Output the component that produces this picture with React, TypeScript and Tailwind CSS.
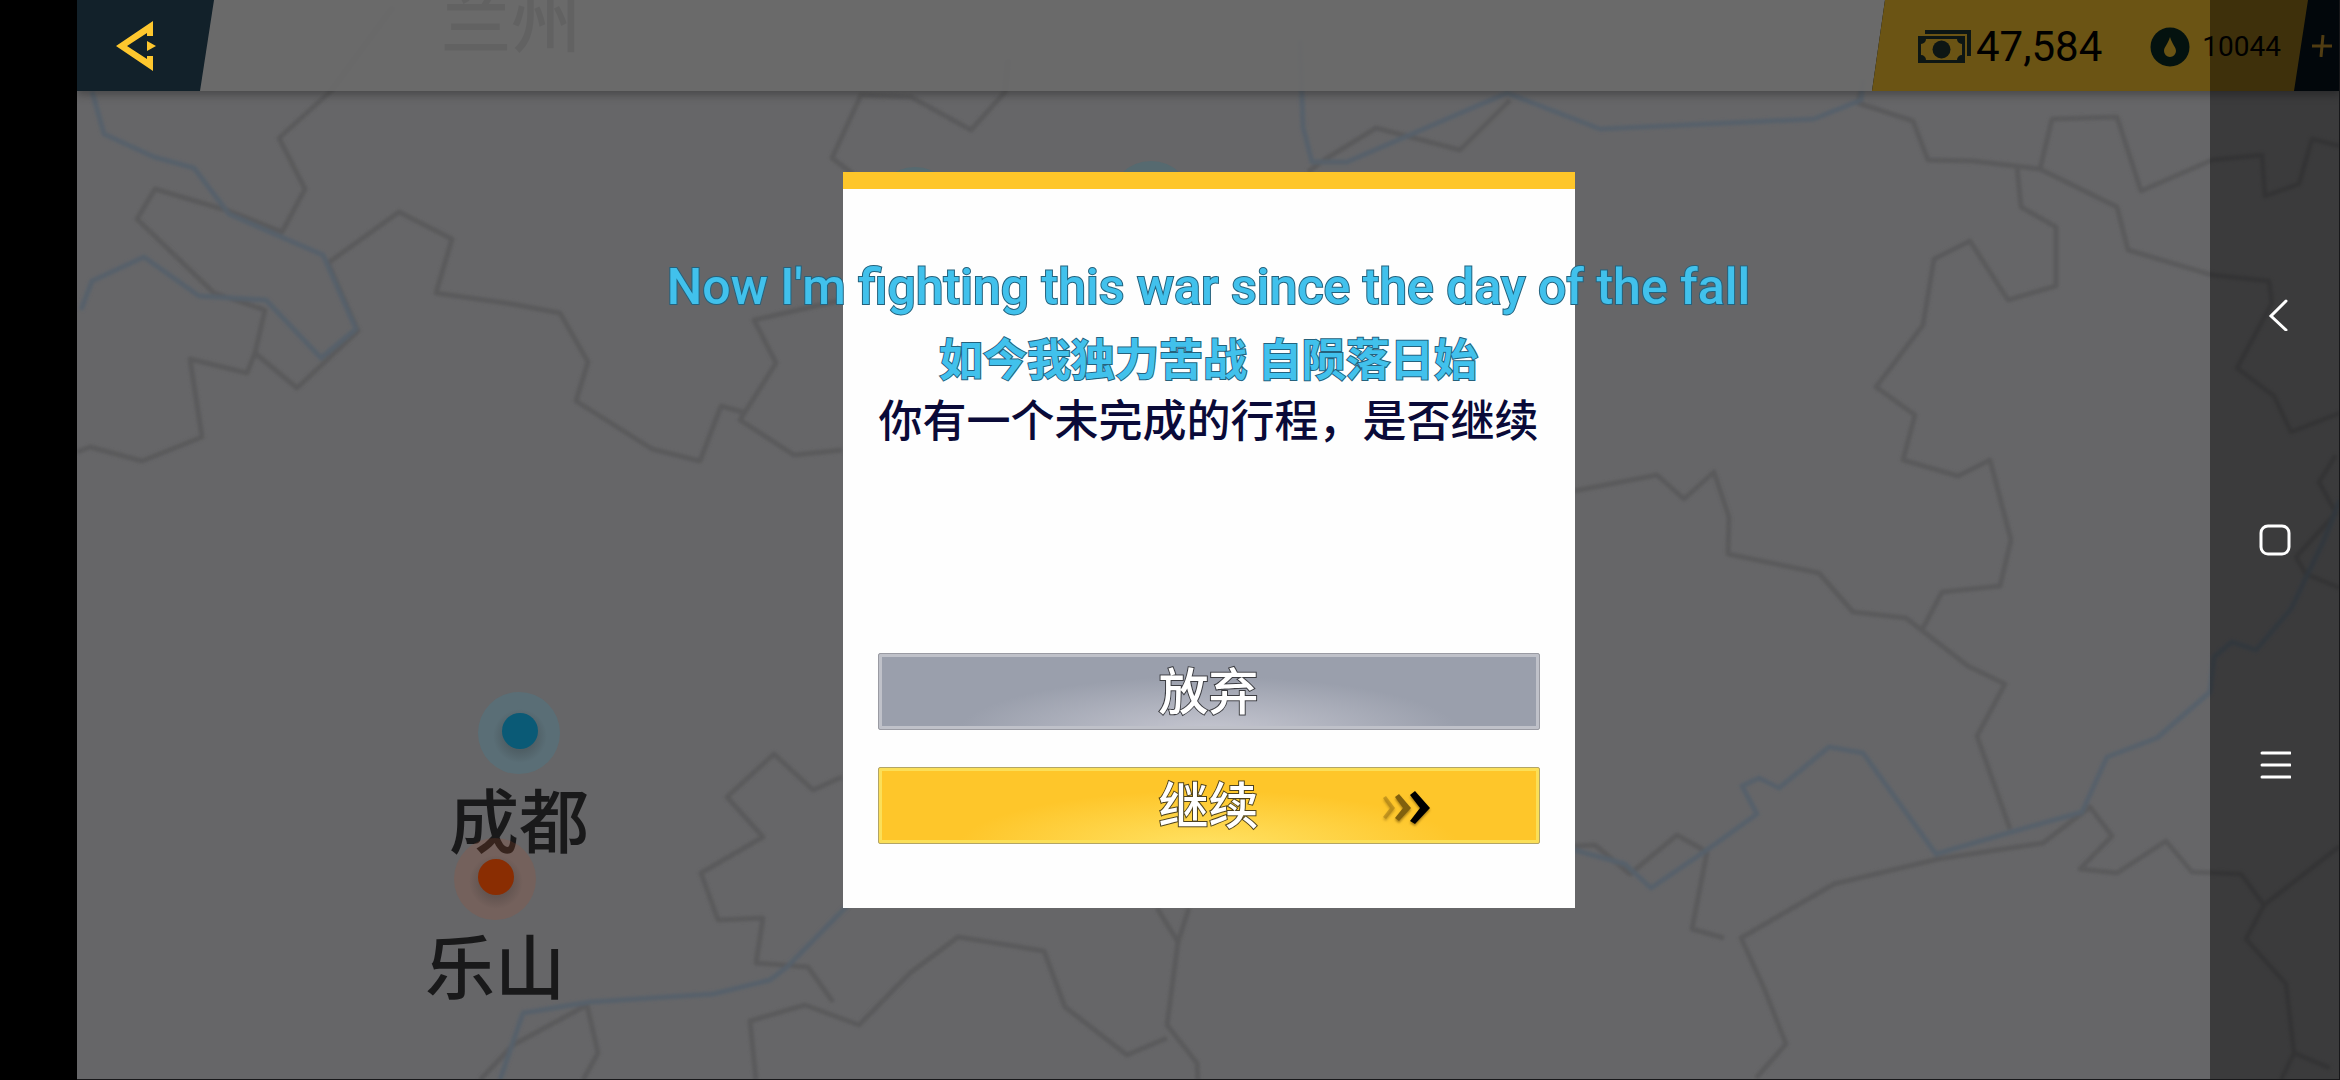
import React, { useState } from 'react';

const borders = [
  'M393 7 L331 91 L279 138 L305 189 L282 232 L229 211 L155 189 L137 219 L214 293 L265 310 L255 353 L247 373 L190 359 L202 437 L142 461 L90 447 L77 452',
  'M255 353 L297 388 L358 331 L328 263 L399 212 L452 239 L436 293 L512 304 L560 313 L588 362 L576 401 L652 449 L700 461 L721 406 L746 413',
  'M842 300 L754 320 L776 363 L740 420 L794 455 L842 450',
  'M1008 60 L1005 92 L971 130 L911 97 L861 95 L832 158 L853 174',
  'M1308 172 L1324 160 L1376 128 L1460 150 L1510 100',
  'M1861 91 L1858 103 L1913 121 L1928 160 L1973 161 L2040 169 L2052 119 L2117 117 L2141 191 L2212 160 L2262 155 L2265 196 L2299 184 L2312 139 L2340 146',
  'M2040 169 L2117 207 L2128 250 L2212 275 L2269 281 L2272 303 L2237 368 L2274 396 L2291 432 L2340 413',
  'M2017 167 L2021 207 L2056 227 L2056 286 L2008 300 L1970 241 L1934 259 L1923 325 L1876 387 L1915 415 L1903 460 L1958 476 L1990 460 L2011 540 L2000 586 L1942 592 L1923 628',
  'M1574 491 L1657 475 L1684 499 L1714 472 L1729 517 L1728 554 L1819 573 L1853 612 L1906 618 L1968 666 L2005 684 L1977 736 L2010 829',
  'M1574 846 L1595 845 L1630 874 L1677 835 L1707 852 L1692 929 L1724 938',
  'M1756 1078 L1786 1044 L1764 988 L1741 938 L1834 884 L1938 859 L2043 843 L2090 807 L2112 836 L2080 869 L2117 873 L2166 841 L2192 872 L2241 874 L2264 905 L2340 846',
  'M2264 905 L2246 939 L2286 984 L2294 1053 L2281 1080',
  'M2294 1053 L2330 1068',
  'M2336 455 L2319 482 L2336 513 L2296 557 L2306 574 L2340 588',
  'M842 777 L813 790 L774 754 L727 797 L763 837 L701 873 L718 920 L763 918 L756 963 L808 967 L833 1002',
  'M756 1080 L750 1021 L805 1005 L859 1025 L910 973 L958 937 L1044 951 L1065 1007 L1127 1055 L1167 1038',
  'M1157 908 L1178 942 L1167 1025 L1197 1063 L1198 1080',
  'M1189 908 L1178 942',
  'M480 1080 L513 1045 L587 1005 L598 1053 L583 1080',
];

const rivers = [
  'M92 91 L104 134 L154 157 L194 168 L229 214 L279 236 L323 255 L356 329 L321 358 L266 300 L199 296 L144 257 L92 281 L81 310',
  'M1300 40 L1303 127 L1312 162 L1347 162 L1507 93 L1600 129 L1814 119 L1861 100 L1863 80',
  'M1574 850 L1625 864 L1651 888 L1704 852 L1757 814 L1742 786 L1759 778 L1779 788 L1829 747 L1863 753 L1936 854 L2008 833 L2082 812 L2107 757 L2157 738 L2210 692 L2214 657 L2232 642 L2256 650 L2291 609 L2324 540 L2340 500',
  'M848 905 L787 967 L770 980 L713 994 L590 1002 L523 1013 L500 1080',
];

function MapBackdrop() {
  return (
    <svg
      className="absolute inset-0 h-full w-full"
      viewBox="77 0 2263 1080"
      preserveAspectRatio="xMinYMin slice"
      fill="none"
      strokeLinejoin="round"
      aria-hidden="true"
    >
      <defs>
        <filter id="soften" x="-5%" y="-5%" width="110%" height="110%">
          <feGaussianBlur stdDeviation="1.5" />
        </filter>
        <radialGradient id="pinShade">
          <stop offset="55%" stopColor="#222" stopOpacity="0.2" />
          <stop offset="100%" stopColor="#222" stopOpacity="0" />
        </radialGradient>
      </defs>
      <g filter="url(#soften)">
        {borders.map((d) => (
          <path key={d} d={d} stroke="#5a5a5b" strokeWidth="5" />
        ))}
        {rivers.map((d) => (
          <path key={d} d={d} stroke="#56606b" strokeWidth="5" />
        ))}
      </g>
      <circle cx="915" cy="208" r="41" fill="#566a70" />
      <circle cx="1151" cy="202" r="41" fill="#566a70" />
    </svg>
  );
}

interface CityPinProps {
  name: string;
  place: string;
  halo: string;
  dot: string;
}

function CityPin({ name, place, halo, dot }: CityPinProps) {
  return (
    <button
      type="button"
      className={`absolute flex flex-col items-center text-[70px] leading-[100px] font-medium text-[#19191a] ${place}`}
    >
      <svg className="h-[82px] w-[82px]" viewBox="0 0 82 82" aria-hidden="true">
        <circle cx="41" cy="41" r="41" className={halo} />
        <circle cx="42" cy="44" r="27" fill="url(#pinShade)" />
        <circle cx="42" cy="39" r="18" className={dot} />
      </svg>
      <span>{name}</span>
    </button>
  );
}

function CashIcon() {
  return (
    <svg className="h-[34px] w-[54px]" viewBox="0 0 54 34" fill="#0d1614" aria-hidden="true">
      <path d="M7 0 H53 V26 H49 V4 H7 Z" />
      <path
        fillRule="evenodd"
        d="M0 6 H47 V33 H0 Z M8 9 A5 5 0 0 1 3 14 V25 A5 5 0 0 1 8 30 H39 A5 5 0 0 1 44 25 V14 A5 5 0 0 1 39 9 Z"
      />
      <circle cx="23.500" cy="19.500" r="9" />
    </svg>
  );
}

function DropIcon() {
  return (
    <svg className="h-10 w-10" viewBox="0 0 40 40" aria-hidden="true">
      <circle cx="20" cy="20" r="19.500" fill="#04120f" />
      <path d="M20 10 C22 17 26 20 26 24 A6 6 0 0 1 14 24 C14 20 18 17 20 10 Z" fill="#6b5414" />
    </svg>
  );
}

function TopBar() {
  return (
    <header className="relative flex h-[91px] bg-[#6a6a6a]/90 shadow-[0_4px_8px_rgba(40,40,40,0.45)]">
      <button
        type="button"
        aria-label="返回"
        className="flex w-[137px] items-center bg-[#12212a] pl-[39px] [clip-path:polygon(0_0,100%_0,calc(100%-14px)_100%,0_100%)]"
      >
        <svg className="h-[50px] w-10" viewBox="0 0 40 50" fill="#fec72e" aria-hidden="true">
          <path d="M0 25 L37 0 V15 H31 V12 L11 25 L31 38 V35 H37 V50 Z" />
          <path d="M31 20 L40 25 L31 30 Z" />
        </svg>
      </button>
      <div className="ml-auto flex w-[468px] bg-[#050d13] text-black [clip-path:polygon(13px_0,100%_0,100%_100%,0_100%)]">
        <div className="flex w-[436px] items-center bg-[#6b5414] pt-0.5 pl-[46px] [clip-path:polygon(0_0,100%_0,calc(100%-14px)_100%,0_100%)]">
          <CashIcon />
          <span className="ml-1 text-[42px]">47,584</span>
          <span className="ml-12 flex items-center gap-3 text-[28px]">
            <DropIcon />
            10044
          </span>
        </div>
        <button type="button" aria-label="充值" className="flex items-center pl-[3px]">
          <svg className="h-[22px] w-[22px]" viewBox="0 0 22 22" stroke="#8a6820" strokeWidth="3" aria-hidden="true">
            <path d="M1 11 H21 M12 0 L10 22" />
          </svg>
        </button>
      </div>
    </header>
  );
}

function TripDialog({ onClose }: { onClose: () => void }) {
  return (
    <div className="absolute inset-0 flex items-center justify-center">
      <section
        role="dialog"
        aria-modal="true"
        aria-labelledby="trip-message"
        className="flex h-[736px] w-[732px] flex-col border-t-[17px] border-[#fec62a] bg-[#fefefe] px-[35px] pb-[64px]"
      >
        <p
          id="trip-message"
          className="mt-[201px] text-center text-[44px] leading-[64px] font-medium whitespace-nowrap text-[#0a0a38]"
        >
          你有一个未完成的行程，是否继续
        </p>
        <div className="mt-auto flex flex-col gap-[37px] text-[50px] font-medium text-white">
          <button
            type="button"
            onClick={onClose}
            className="flex h-[77px] items-center justify-center rounded-xs border border-[#9a9ba3] bg-[radial-gradient(ellipse_38%_75%_at_50%_105%,#c6c7d1,#9a9fac)] pt-1 shadow-[inset_0_0_0_3px_#bfc1c9] [-webkit-text-stroke:2px_#3c3d42] [paint-order:stroke_fill]"
          >
            放弃
          </button>
          <button
            type="button"
            onClick={onClose}
            className="relative flex h-[77px] items-center justify-center rounded-xs border border-[#b3a565] bg-[radial-gradient(ellipse_38%_75%_at_50%_105%,#ffe264,#fec62a)] pt-1 shadow-[inset_0_0_0_3px_#fbdf58] [-webkit-text-stroke:2px_#4f431c] [paint-order:stroke_fill]"
          >
            继续
            <svg
              className="absolute right-[108px] h-9 w-12 drop-shadow-[0_2px_1px_rgba(90,60,0,0.5)]"
              viewBox="0 0 48 36"
              aria-hidden="true"
            >
              <path d="M0 8 L3 6 L12 18 L3 29 L0 27 L7 18 Z" fill="#a87f18" fillOpacity="0.6" />
              <path d="M12 7 L16 4 L28 18 L16 31 L12 28 L20 18 Z" fill="#80600e" />
              <path d="M27 5 L32 1 L47 18 L32 34 L27 31 L37 18 Z" fill="#000" />
            </svg>
          </button>
        </div>
      </section>
    </div>
  );
}

function FloatingLyrics() {
  return (
    <div className="pointer-events-none absolute inset-x-0 top-[251px] text-center whitespace-nowrap text-[#41c1ec] [-webkit-text-stroke:2px_#24627d] [paint-order:stroke_fill]">
      <p className="text-[50px] leading-[72px] font-medium">
        Now I'm fighting this war since the day of the fall
      </p>
      <p className="text-[44px] leading-[76px] font-bold">如今我独力苦战 自陨落日始</p>
    </div>
  );
}

function SystemNav() {
  return (
    <nav className="absolute inset-y-0 right-0 flex w-[130px] flex-col justify-center bg-black/42 text-white">
      <button type="button" aria-label="Back" className="flex h-[225px] items-center justify-center">
        <svg className="h-8 w-8" viewBox="0 0 32 32" fill="none" stroke="currentColor" strokeWidth="3" strokeLinecap="round">
          <path d="M27 2 L12 17 L27 31" />
        </svg>
      </button>
      <button type="button" aria-label="Home" className="flex h-[225px] items-center justify-center">
        <svg className="h-8 w-8" viewBox="0 0 32 32" fill="none" stroke="currentColor" strokeWidth="3">
          <rect x="2" y="2" width="28" height="28" rx="7" />
        </svg>
      </button>
      <button type="button" aria-label="Recents" className="flex h-[225px] items-center justify-center">
        <svg className="h-8 w-8" viewBox="0 0 32 32" fill="none" stroke="currentColor" strokeWidth="3" strokeLinecap="round">
          <path d="M3 4 H31 M3 16 H31 M3 28 H31" />
        </svg>
      </button>
    </nav>
  );
}

export default function App() {
  const [dialogOpen, setDialogOpen] = useState(true);

  return (
    <div className="flex min-h-screen bg-black font-[Roboto,'Noto_Sans_CJK_SC',sans-serif]">
      <main className="relative ml-[77px] flex-1 overflow-hidden bg-[#666668]">
        <MapBackdrop />

        {/* Cities */}
        <CityPin
          name="兰州"
          place="left-[364px] top-[-108px]"
          halo="fill-[#2f8fae]/20"
          dot="fill-[#0a5873]"
        />
        <CityPin
          name="成都"
          place="left-[372px] top-[692px]"
          halo="fill-[#2f8fae]/20"
          dot="fill-[#0a5a76]"
        />
        <CityPin
          name="乐山"
          place="left-[348px] top-[838px]"
          halo="fill-[#b0502f]/20"
          dot="fill-[#8a2d02]"
        />

        <TopBar />
        {dialogOpen && <TripDialog onClose={() => setDialogOpen(false)} />}
        <FloatingLyrics />
        <SystemNav />
        <div className="pointer-events-none absolute inset-0 border-r border-b border-[#18181a]" />
      </main>
    </div>
  );
}
